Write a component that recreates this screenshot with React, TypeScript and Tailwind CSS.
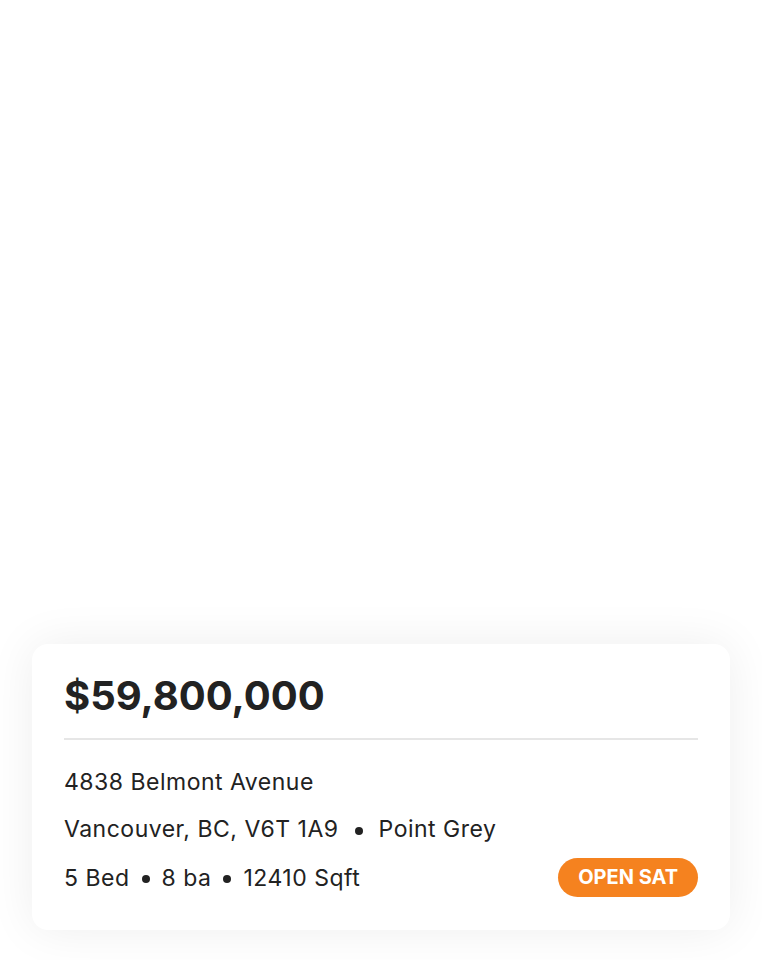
import React from 'react';

const listing = {
  price: '$59,800,000',
  street: '4838 Belmont Avenue',
  city: 'Vancouver, BC, V6T 1A9',
  area: 'Point Grey',
  beds: 5,
  baths: 8,
  sqft: 12410,
  badge: 'OPEN SAT',
};

const Dot = ({ wide }: { wide?: boolean }) => (
  <span
    className={
      wide
        ? 'mx-[16px] inline-block h-[8px] w-[8px] rounded-full bg-[#222] align-middle'
        : 'mx-[12px] inline-block h-[8px] w-[8px] rounded-full bg-[#222] align-middle'
    }
  />
);

export default function App() {
  return (
    <div
      className="min-h-screen bg-white px-8 pt-[644px] pb-[30px] text-[#222]"
      style={{ fontFamily: 'Inter, "Noto Sans", sans-serif' }}
    >
      {/* Listing card */}
      <div className="rounded-2xl bg-white px-8 pt-[28px] pb-[33px] shadow-[0_0_48px_rgba(0,0,0,0.07)]">
        <h1 className="text-[40px] font-bold leading-[48px]">{listing.price}</h1>
        <div className="mt-[18px] h-[2px] bg-[#e6e6e6]" />

        <div className="mt-[28px] text-[23px] leading-[28px] tracking-[0.5px]">
          <p>{listing.street}</p>
          <p className="mt-[19px]">
            {listing.city}
            <Dot wide />
            {listing.area}
          </p>
          <div className="mt-[15px] flex items-center justify-between">
            <p>
              {listing.beds} Bed
              <Dot />
              {listing.baths} ba
              <Dot />
              {listing.sqft} Sqft
            </p>
            <span className="rounded-full bg-[#f5821f] px-[20px] py-[6px] text-[20px] font-bold leading-[27px] tracking-normal text-white">
              {listing.badge}
            </span>
          </div>
        </div>
      </div>
    </div>
  );
}
